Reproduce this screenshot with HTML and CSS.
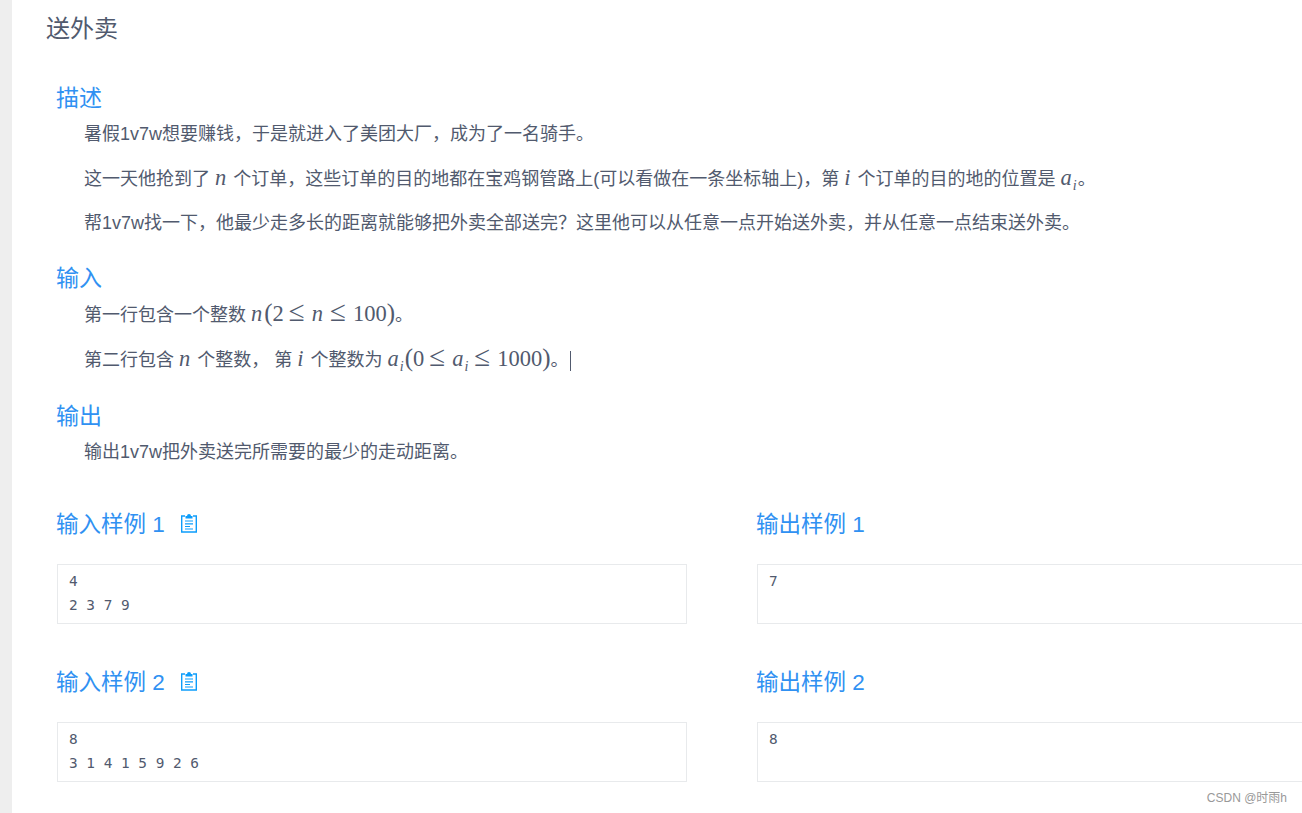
FILE: index.html
```html
<!DOCTYPE html>
<html lang="zh">
<head>
<meta charset="utf-8">
<title>送外卖</title>
<link rel="stylesheet" href="styles.css">
</head>
<body>
<main class="page">
  <h1 class="title">送外卖</h1>
  <section class="sec sec-first">
    <h2 class="head">描述</h2>
    <p class="para">暑假1v7w想要赚钱，于是就进入了美团大厂，成为了一名骑手。</p>
    <p class="para">这一天他抢到了 <i class="m var-n">n</i> 个订单，这些订单的目的地都在宝鸡钢管路上(可以看做在一条坐标轴上)，第 <i class="m var-i">i</i> 个订单的目的地的位置是 <span class="math"><i>a</i><sub>i</sub></span>。</p>
    <p class="para">帮1v7w找一下，他最少走多长的距离就能够把外卖全部送完？这里他可以从任意一点开始送外卖，并从任意一点结束送外卖。</p>
  </section>
  <section class="sec sec-input">
    <h2 class="head head-input">输入</h2>
    <p class="para">第一行包含一个整数 <span class="math"><i class="var-n">n</i><span class="big">(</span>2<span class="op">≤</span><i class="var-n">n</i><span class="op">≤</span>100<span class="big">)</span></span>。</p>
    <p class="para">第二行包含 <i class="m var-n">n</i> 个整数， 第 <i class="m var-i">i</i> 个整数为 <span class="math"><i>a</i><sub>i</sub><span class="big">(</span>0<span class="op">≤</span><i>a</i><sub>i</sub><span class="op">≤</span>1000<span class="big">)</span></span>。<span class="caret"></span></p>
  </section>
  <section class="sec">
    <h2 class="head">输出</h2>
    <p class="para">输出1v7w把外卖送完所需要的最少的走动距离。</p>
  </section>
  <section class="samples">
    <div class="sample">
      <h3 class="sample-head">输入样例 1
        <svg class="copy" viewBox="0 0 18 20" width="18" height="20" aria-hidden="true"><path d="M5 3H1.700v16h14.600V3H13" fill="none" stroke="#0d9dfb" stroke-width="1.4"/><path d="M5.500 5.500V3H7a2 2 0 0 1 4 0h1.500v2.500z" fill="#0d9dfb"/><path d="M5 8h8M5 10.800h8M5 13.500h5M5 16h8" stroke="#0d9dfb" stroke-width="1.200"/></svg>
      </h3>
      <pre class="box">4
2 3 7 9</pre>
    </div>
    <div class="sample">
      <h3 class="sample-head">输出样例 1</h3>
      <pre class="box">7</pre>
    </div>
    <div class="sample">
      <h3 class="sample-head">输入样例 2
        <svg class="copy" viewBox="0 0 18 20" width="18" height="20" aria-hidden="true"><path d="M5 3H1.700v16h14.600V3H13" fill="none" stroke="#0d9dfb" stroke-width="1.4"/><path d="M5.500 5.500V3H7a2 2 0 0 1 4 0h1.500v2.500z" fill="#0d9dfb"/><path d="M5 8h8M5 10.800h8M5 13.500h5M5 16h8" stroke="#0d9dfb" stroke-width="1.200"/></svg>
      </h3>
      <pre class="box">8
3 1 4 1 5 9 2 6</pre>
    </div>
    <div class="sample">
      <h3 class="sample-head">输出样例 2</h3>
      <pre class="box">8</pre>
    </div>
  </section>
</main>
<div class="mark">CSDN @时雨h</div>
</body>
</html>
```
FILE: styles.css
```css
html, body {
  margin: 0;
  height: 813px;
  overflow: hidden;
  background: #fff;
}
body {
  font-family: "Liberation Sans", "Noto Sans CJK SC", sans-serif;
  color: #515a6e;
  border-left: 12px solid #eeeeee;
}
.page {
  width: 1290px;
  overflow: hidden;
}
.title {
  margin: 0 0 0 34px;
  height: 58px;
  line-height: 58px;
  font-size: 24px;
  font-weight: 400;
}
.sec {
  padding-left: 44px;
  margin-bottom: 24px;
}
.sec-first {
  margin-top: 23px;
}
.sec-input {
  margin-bottom: 25px;
}
.head {
  margin: 0 0 5px;
  font-size: 23px;
  line-height: 34px;
  font-weight: 400;
  color: #3091f2;
}
.head-input {
  margin-bottom: 6px;
}
.para {
  margin: 0 0 16.500px 28px;
  font-size: 18px;
  line-height: 28px;
  height: 28px;
  white-space: nowrap;
}
.sec .para:last-child {
  margin-bottom: 0;
}
.m, .math {
  font-family: "Liberation Serif", serif;
  font-size: 22.500px;
  line-height: 0;
}
.var-n {
  letter-spacing: 2px;
}
.var-i {
  margin-right: 2px;
}
.math sub {
  margin: 0 1px;
  font-size: 14px;
  font-style: italic;
  line-height: 0;
}
.big {
  font-size: 25px;
  line-height: 0;
}
.op {
  margin: 0 7px 0 5px;
  font-size: 29px;
  line-height: 0;
}
.caret {
  display: inline-block;
  width: 1px;
  height: 20px;
  background: #515a6e;
  margin-left: 1px;
  vertical-align: -5px;
}
.samples {
  display: grid;
  grid-template-columns: 630px 630px;
  column-gap: 70px;
  margin: 42px 0 0 45px;
}
.sample {
  height: 158px;
}
.sample-head {
  margin: 0 0 22px -1px;
  height: 34px;
  line-height: 34px;
  font-size: 22.500px;
  font-weight: 400;
  color: #3091f2;
}
.copy {
  margin-left: 9px;
  vertical-align: -1.500px;
}
.box {
  box-sizing: border-box;
  height: 60px;
  margin: 0;
  padding: 4px 11px;
  border: 1px solid #e8eaec;
  font-family: "DejaVu Sans Mono", monospace;
  font-size: 14.400px;
  line-height: 24px;
  color: #515a6e;
}
.mark {
  position: absolute;
  right: 15px;
  bottom: 7px;
  font-size: 12px;
  line-height: 16px;
  color: #999999;
}
```
